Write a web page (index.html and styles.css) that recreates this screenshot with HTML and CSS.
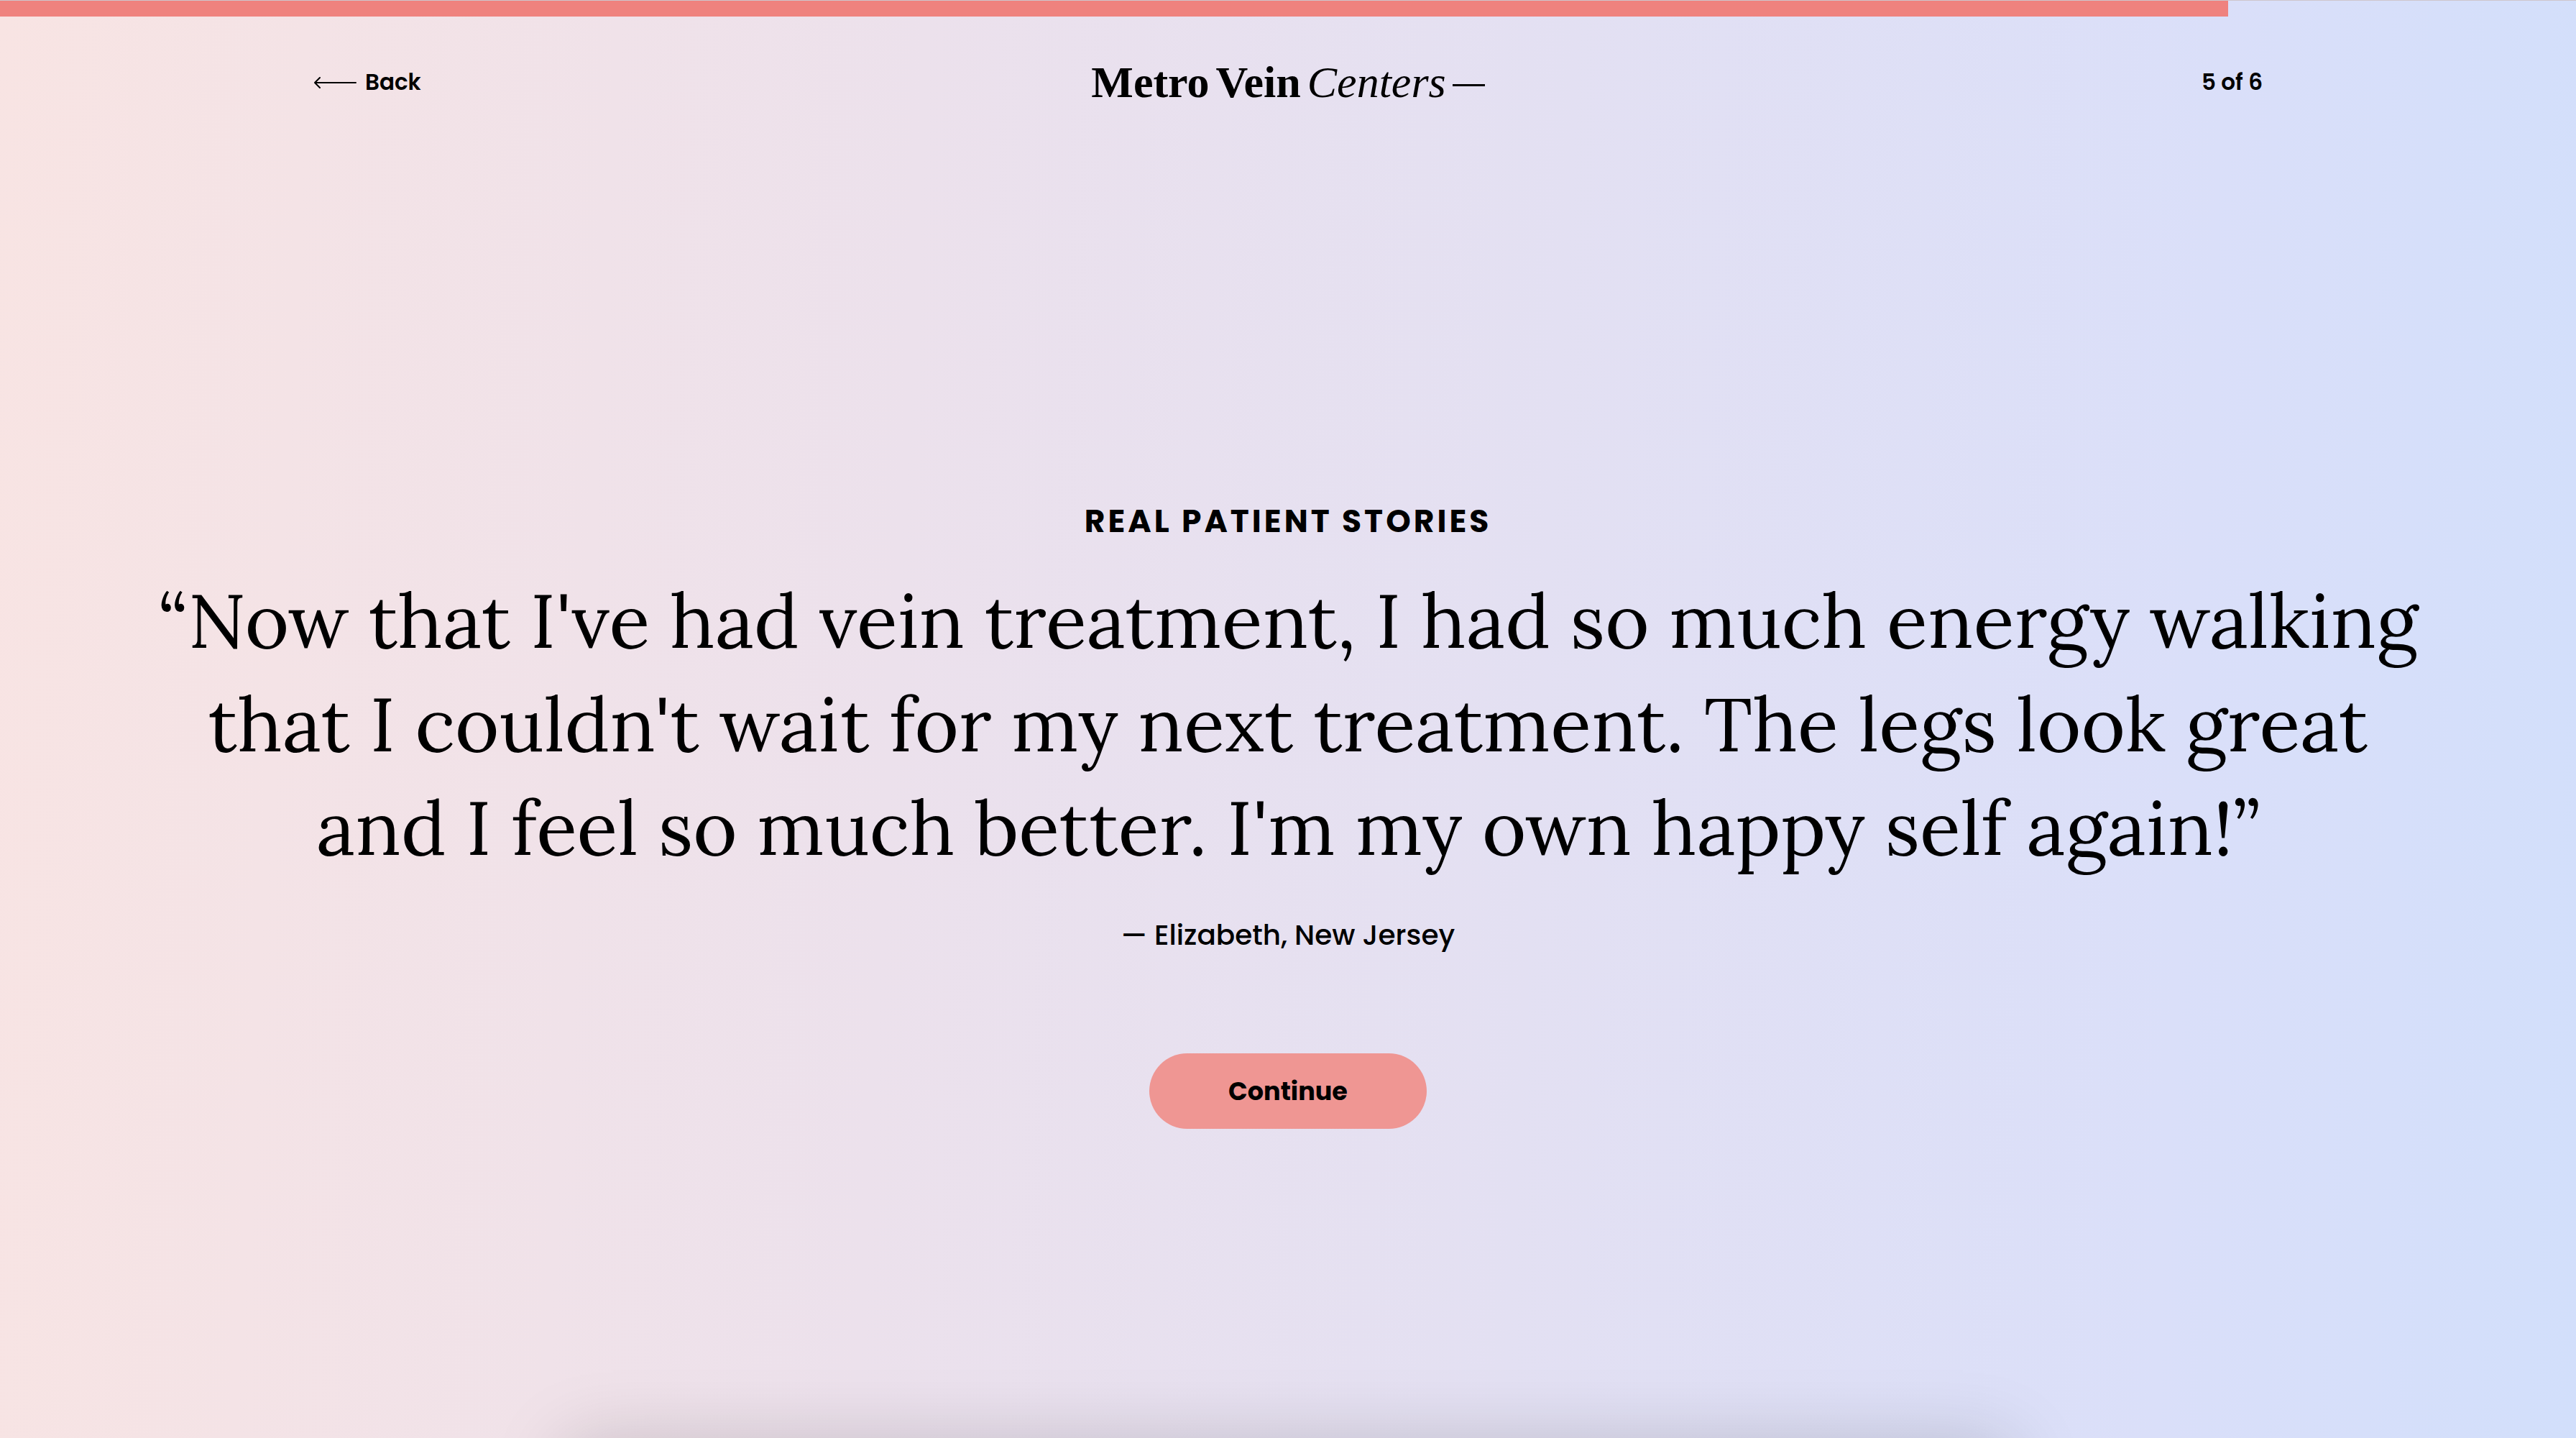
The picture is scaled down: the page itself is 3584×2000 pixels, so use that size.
FILE: index.html
```html
<!DOCTYPE html>
<html lang="en">

<head>
  <meta charset="UTF-8" />
  <meta name="viewport" content="width=device-width, initial-scale=1" />
  <title>Metro Vein Centers</title>
  <link rel="stylesheet" href="styles.css">
</head>

<body>
  <div class="page">

    <div class="progress">
      <div class="progress-bar" style="width: 86.5%"></div>
    </div>

    <header class="header">
      <a class="back" href="#">
        <svg class="back-arrow" viewBox="0 0 60 18" fill="none" stroke="#000" stroke-width="2" stroke-linecap="round" stroke-linejoin="round" aria-hidden="true">
          <path d="M59 10H2M9 3l-7 7 7 7" />
        </svg>
        Back
      </a>
      <div class="logo">
        <strong>Metro</strong>
        <strong>Vein</strong>
        <em>Centers</em>
        <span class="logo-dash"></span>
      </div>
      <span class="step">5 of 6</span>
    </header>

    <main class="story">
      <h2 class="eyebrow">Real patient stories</h2>
      <blockquote class="quote">“Now that I've had vein treatment, I had so much energy walking that I couldn't wait for my next treatment. The legs look great and I feel so much better. I'm my own happy self again!”</blockquote>
      <p class="author">— Elizabeth, New Jersey</p>
      <button class="btn-continue" type="button">Continue</button>
    </main>

    <div class="drawer"></div>
  </div>
</body>

</html>
```
FILE: styles.css
```css
* {
  box-sizing: border-box;
}

body {
  margin: 0;
  color: #000;
  font-family: Poppins, Inter, sans-serif;
}

.page {
  position: relative;
  display: flex;
  flex-direction: column;
  min-height: 100vh;
  overflow: hidden;
  background: linear-gradient(93deg, #f8e4e3, #ece1ec 35%, #dadff9 84%, #d2dffb);
}

/* progress */
.progress {
  height: 23px;
  border-top: 1px solid #cec6cc;
}

.progress-bar {
  height: 100%;
  background-color: #ef827e;
}

/* header */
.header {
  display: grid;
  grid-template-columns: 1fr auto 1fr;
  align-items: center;
  height: 182px;
  padding: 0 436px;
  font-size: 31px;
  font-weight: 600;
}

.back {
  display: flex;
  align-items: center;
  gap: 12px;
  color: inherit;
  text-decoration: none;
}

.back-arrow {
  width: 60px;
  height: 18px;
}

.logo {
  display: flex;
  align-items: baseline;
  gap: 9px;
  font-family: "Liberation Serif", serif;
  font-size: 62px;
  line-height: 64px;
}

.logo em {
  font-weight: 400;
}

.logo-dash {
  width: 45px;
  height: 3px;
  align-self: center;
  margin-top: 8px;
  background-color: #000;
}

.step {
  text-align: right;
}

/* patient story */
.story {
  flex: 1;
  display: flex;
  flex-direction: column;
  align-items: center;
  padding: 490px 200px 0;
  text-align: center;
}

.eyebrow {
  margin: 0 0 36px;
  font-size: 44px;
  line-height: 60px;
  font-weight: 700;
  letter-spacing: 4px;
  text-transform: uppercase;
}

.quote {
  margin: 0;
  font-family: Lora, "Liberation Serif", serif;
  font-size: 105px;
  line-height: 144px;
}

.author {
  margin: 48px 0 134px;
  font-size: 39px;
  line-height: 60px;
  font-weight: 500;
}

.btn-continue {
  padding: 0 110px;
  border: 0;
  border-radius: 53px;
  background-color: #ef9693;
  color: #000;
  font-family: inherit;
  font-size: 35px;
  line-height: 105px;
  font-weight: 700;
  cursor: pointer;
}

/* closed drawer, only its shadow shows */
.drawer {
  position: absolute;
  top: 100%;
  left: 22%;
  right: 22%;
  height: 400px;
  box-shadow: 0 10px 100px rgba(0, 0, 0, 0.18);
}
```
